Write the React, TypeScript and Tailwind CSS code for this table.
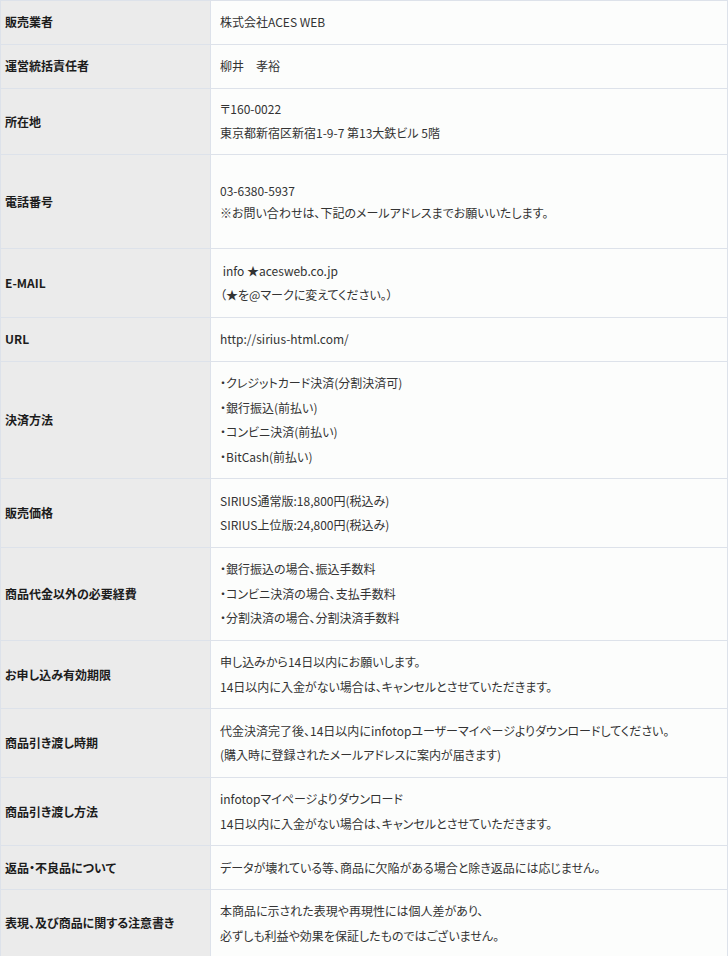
import React from "react";

type Row = { label: string; lines: string[]; cell?: string };

const base = "pt-[9.3px] pb-[9px] leading-[24.6px]";

const rows: Row[] = [
  { label: "販売業者", lines: ["株式会社ACES WEB"] },
  { label: "運営統括責任者", lines: ["柳井　孝裕"] },
  { label: "所在地", lines: ["〒160-0022", "東京都新宿区新宿1-9-7 第13大鉄ビル 5階"], cell: "pt-[8.5px] pb-[9px] leading-[24px]" },
  {
    label: "電話番号",
    lines: ["03-6380-5937", "※お問い合わせは、下記のメールアドレスまでお願いいたします。"],
    cell: "pt-[25px] pb-[24px] leading-[22px]",
  },
  { label: "E-MAIL", lines: ["\u00a0info ★acesweb.co.jp", "（★を@マークに変えてください。）"] },
  { label: "URL", lines: ["http://sirius-html.com/"] },
  {
    label: "決済方法",
    lines: ["・クレジットカード決済(分割決済可)", "・銀行振込(前払い)", "・コンビニ決済(前払い)", "・BitCash(前払い)"],
  },
  { label: "販売価格", lines: ["SIRIUS通常版:18,800円(税込み)", "SIRIUS上位版:24,800円(税込み)"] },
  {
    label: "商品代金以外の必要経費",
    lines: ["・銀行振込の場合、振込手数料", "・コンビニ決済の場合、支払手数料", "・分割決済の場合、分割決済手数料"],
  },
  {
    label: "お申し込み有効期限",
    lines: ["申し込みから14日以内にお願いします。", "14日以内に入金がない場合は、キャンセルとさせていただきます。"],
  },
  {
    label: "商品引き渡し時期",
    lines: [
      "代金決済完了後、14日以内にinfotopユーザーマイページよりダウンロードしてください。",
      "(購入時に登録されたメールアドレスに案内が届きます)",
    ],
  },
  {
    label: "商品引き渡し方法",
    lines: ["infotopマイページよりダウンロード", "14日以内に入金がない場合は、キャンセルとさせていただきます。"],
  },
  { label: "返品・不良品について", lines: ["データが壊れている等、商品に欠陥がある場合と除き返品には応じません。"] },
  {
    label: "表現、及び商品に関する注意書き",
    lines: ["本商品に示された表現や再現性には個人差があり、", "必ずしも利益や効果を保証したものではございません。"],
    cell: "pt-[9px] pb-[8px] leading-[24.3px]",
  },
];

export default function App() {
  return (
    <div
      className="w-[728px] bg-white [font-feature-settings:'palt'] text-[12px]"
      style={{ fontFamily: '"Noto Sans CJK JP", "Noto Sans", sans-serif' }}
    >
      <div className="flex flex-col border-t border-l border-r border-[#dde2ea]">
        {rows.map((r, i) => (
          <div key={i} className="flex border-b border-[#dde2ea]">
            <div className="w-[210px] shrink-0 flex items-center border-r border-[#dde2ea] bg-[#ebebeb] pl-[4px] font-bold text-[#1c1c1c]">
              {r.label}
            </div>
            <div className={`flex-1 bg-[#fcfdfc] pl-[9px] text-[#333333] ${r.cell ?? base}`}>
              {r.lines.map((l, j) => (
                <div key={j} className="whitespace-pre">
                  {l}
                </div>
              ))}
            </div>
          </div>
        ))}
      </div>
    </div>
  );
}
